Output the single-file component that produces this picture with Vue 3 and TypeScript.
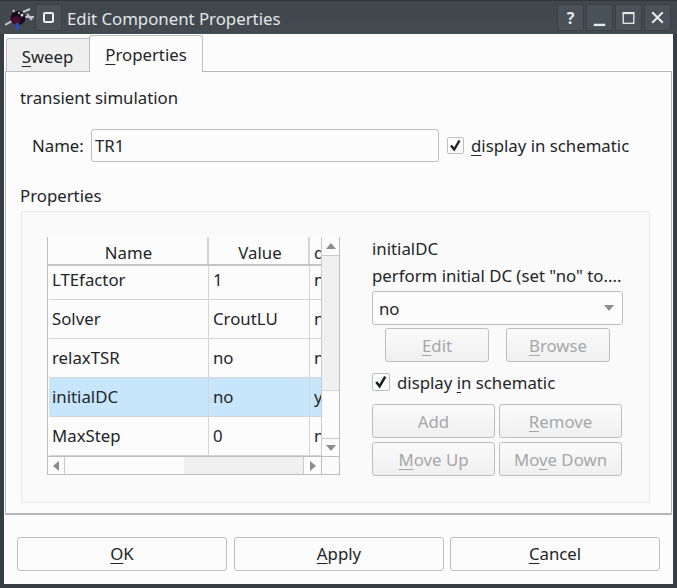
<script setup lang="ts">
interface Row { name: string; value: string; display: string; selected?: boolean; height: number; first?: boolean }
const rows: Row[] = [
  { name: 'LTEfactor', value: '1', display: 'no', height: 34, first: true },
  { name: 'Solver', value: 'CroutLU', display: 'no', height: 39 },
  { name: 'relaxTSR', value: 'no', display: 'no', height: 39 },
  { name: 'initialDC', value: 'no', display: 'yes', selected: true, height: 39 },
  { name: 'MaxStep', value: '0', display: 'no', height: 39 },
]
</script>

<template>
  <div class="window">
    <header class="titlebar">
      <svg class="logo" width="29" height="27" viewBox="0 0 29 27">
        <path d="M0 20 L9 15 M18 7 L25 4 M19 12 L29 12 M22 9 L27 15 M8 5 L11 9" stroke="#c4c4ce" stroke-width="2" fill="none" />
        <ellipse cx="13" cy="13" rx="7.5" ry="7" fill="#170c1c" />
        <ellipse cx="11" cy="15" rx="4.5" ry="3.6" fill="#4a0f2a" />
        <path d="M12 18 L13 25" stroke="#2a4fa8" stroke-width="3.5" />
        <circle cx="17" cy="10" r="1.5" fill="#d8d8e0" />
        <circle cx="14" cy="8" r="1" fill="#d8d8e0" />
      </svg>
      <button class="wbtn sys"><span class="sysglyph"></span></button>
      <span class="title">Edit Component Properties</span>
      <span class="spacer"></span>
      <div class="wbtns">
        <button class="wbtn help">?</button>
        <button class="wbtn"><svg width="26" height="27" viewBox="0 0 26 27"><rect x="7" y="20" width="12" height="2.4" fill="#e6e8e9" /></svg></button>
        <button class="wbtn"><svg width="26" height="27" viewBox="0 0 26 27"><rect x="7.5" y="8.5" width="11" height="11" fill="none" stroke="#e6e8e9" stroke-width="1.4" /><rect x="7" y="8" width="12" height="2" fill="#e6e8e9" /></svg></button>
        <button class="wbtn"><svg width="26" height="27" viewBox="0 0 26 27"><path d="M7.5 8 L18.5 19 M18.5 8 L7.5 19" stroke="#e6e8e9" stroke-width="2.2" /></svg></button>
      </div>
    </header>

    <main class="client">
      <div class="tabs">
        <div class="tab"><span class="m">S</span>weep</div>
        <div class="tab active"><span class="m">P</span>roperties</div>
      </div>
      <section class="pane">
        <div class="desc">transient simulation</div>
        <div class="name-row">
          <label class="name-label">Name:</label>
          <div class="input">TR1</div>
          <span class="check"><svg width="17" height="17" viewBox="0 0 17 17"><path d="M4 8.5 L7.2 12.5 L12.5 3.5" fill="none" stroke="#1c1f22" stroke-width="2.4" /></svg></span>
          <span class="check-text"><span class="m">d</span>isplay in schematic</span>
        </div>
        <div class="group-title">Properties</div>
        <div class="group">
          <div class="table">
            <div class="table-main">
              <div class="thead">
                <div class="th c1">Name</div>
                <div class="th c2">Value</div>
                <div class="th c3">display</div>
              </div>
              <div v-for="r in rows" :key="r.name" class="tr" :class="{ sel: r.selected, first: r.first }" :style="{ height: r.height + 'px' }">
                <div class="td c1">{{ r.name }}</div>
                <div class="td c2">{{ r.value }}</div>
                <div class="td c3">{{ r.display }}</div>
              </div>
            </div>
            <div class="vbar">
              <div class="arrow-box top"><span class="tri up"></span></div>
              <div class="vthumb"></div>
              <div class="vtrack"></div>
              <div class="arrow-box bottom"><span class="tri down"></span></div>
            </div>
            <div class="hbar">
              <div class="harrow"><span class="tri left"></span></div>
              <div class="hthumb"></div>
              <div class="htrack"></div>
              <div class="harrow right-a"><span class="tri right"></span></div>
            </div>
            <div class="corner"></div>
          </div>

          <div class="side">
            <div class="side-name">initialDC</div>
            <div class="side-desc">perform initial DC (set "no" to....</div>
            <div class="combo"><span>no</span><span class="tri down combo-tri"></span></div>
            <div class="edit-row">
              <button class="btn dis edit"><span class="m">E</span>dit</button>
              <button class="btn dis edit"><span class="m">B</span>rowse</button>
            </div>
            <div class="side-check">
              <span class="check big"><svg width="18" height="18" viewBox="0 0 17 17"><path d="M4 8.5 L7.2 12.5 L12.5 3.5" fill="none" stroke="#1c1f22" stroke-width="2.4" /></svg></span>
              <span class="check-text">display <span class="m">i</span>n schematic</span>
            </div>
            <div class="btn-grid">
              <button class="btn dis">Add</button>
              <button class="btn dis"><span class="m">R</span>emove</button>
              <button class="btn dis"><span class="m">M</span>ove Up</button>
              <button class="btn dis">Mo<span class="m">v</span>e Down</button>
            </div>
          </div>
        </div>
      </section>
      <footer class="footer">
        <button class="btn main"><span class="m">O</span>K</button>
        <button class="btn main"><span class="m">A</span>pply</button>
        <button class="btn main last"><span class="m">C</span>ancel</button>
      </footer>
    </main>
  </div>
</template>

<style>
html, body { margin: 0; padding: 0; background: #3a4248; }
</style>

<style scoped>
* { box-sizing: border-box; }
.window {
  width: 677px;
  height: 588px;
  display: flex;
  flex-direction: column;
  background: #363e44;
  font-family: "Noto Sans", sans-serif;
  font-size: 16.8px;
  color: #232629;
  overflow: hidden;
}
.titlebar {
  height: 34px;
  flex: none;
  display: flex;
  align-items: flex-start;
  padding: 3px 6px 0 5px;
  background: linear-gradient(#3f474d, #434b51);
  border-top: 1px solid #2f363b;
  color: #e3e5e6;
}
.logo { flex: none; margin: 1px 1px 0 0; }
.wbtn {
  width: 27px;
  height: 27px;
  padding: 0;
  border: 1px solid #394045;
  border-radius: 2px;
  background: #495258;
  color: #e6e8e9;
  display: flex;
  align-items: center;
  justify-content: center;
  font-family: "Noto Sans", sans-serif;
}
.sys { flex: none; }
.sysglyph {
  width: 11px;
  height: 11px;
  border: 2px solid #eceeef;
  border-radius: 2px;
}
.title { margin-left: 5px; line-height: 32px; margin-top: -1px; white-space: nowrap; }
.spacer { flex: 1; }
.wbtns { display: flex; gap: 2px; }
.help { font-weight: 700; font-size: 16px; }
.client {
  flex: 1;
  margin: 0 4px 4px 4px;
  background: #fcfcfc;
  display: flex;
  flex-direction: column;
  padding: 0 1px 0 1px;
}
.tabs {
  display: flex;
  align-items: flex-end;
  height: 38px;
  padding-left: 1px;
  margin-bottom: -1px;
  position: relative;
  z-index: 1;
}
.tab {
  width: 84px;
  height: 34px;
  background: #efefef;
  border: 1px solid #bcbebf;
  border-bottom: 1px solid #bcbebf;
  border-right: none;
  border-radius: 3px 0 0 0;
  text-align: center;
  line-height: 36px;
  padding-right: 2px;
}
.tab.active {
  width: 114px;
  height: 37px;
  background: #fcfcfc;
  border-right: 1px solid #bcbebf;
  border-bottom: none;
  border-radius: 3px 3px 0 0;
  line-height: 38px;
  margin-left: -1px;
  padding-right: 0;
}
.m { text-decoration: underline; text-underline-offset: 3px; text-decoration-thickness: 1px; text-decoration-skip-ink: none; }
.pane {
  width: 667px;
  height: 444px;
  flex: none;
  background: #fcfcfc;
  border: 1px solid #b4b6b8;
  border-bottom-width: 2px;
  padding: 14px 0 0 14px;
  display: flex;
  flex-direction: column;
}
.desc { line-height: 24px; height: 24px; }
.name-row {
  display: flex;
  align-items: center;
  margin-top: 19px;
  height: 33px;
  padding-left: 12px;
}
.name-label { width: 59px; flex: none; }
.input {
  width: 348px;
  height: 33px;
  flex: none;
  border: 1px solid #bcbebf;
  border-radius: 3px;
  background: #fcfcfc;
  padding-left: 3px;
  line-height: 31px;
}
.check {
  width: 17px;
  height: 17px;
  flex: none;
  border: 1px solid #bcbebf;
  border-radius: 2px;
  background: #fcfcfc;
  display: block;
}
.check.big { width: 18px; height: 18px; }
.check svg { display: block; margin: -1px; }
.name-row .check { margin-left: 8px; }
.check-text { margin-left: 7px; white-space: nowrap; }
.group-title { margin-top: 22px; line-height: 24px; height: 24px; }
.group {
  margin-top: 3px;
  width: 629px;
  height: 292px;
  margin-left: 1px;
  border: 1px solid #e8e8e8;
  border-radius: 2px;
  background: #fafafa;
  padding: 25px 0 0 25px;
  display: flex;
}
.table {
  width: 293px;
  height: 238px;
  flex: none;
  display: grid;
  grid-template-columns: 274px 19px;
  grid-template-rows: 219px 19px;
  background: #fcfcfc;
}
.table-main {
  overflow: hidden;
  border-left: 1px solid #bcbebf;
  background: #fcfcfc;
}
.thead { display: flex; height: 29px; border-bottom: 2px solid #c4c5c6; }
.th {
  text-align: center;
  line-height: 32px;
  border-right: 2px solid #d4d5d6;
  flex: none;
  overflow: hidden;
}
.th.c1 { padding-left: 2px; }
.th.c2 { padding-left: 3px; }
.tr { display: flex; border-bottom: 1px solid #d4d5d6; margin-left: 1px; }
.tr.sel { background: #c7e6fb; }
.td {
  flex: none;
  padding: 0 0 2px 4px;
  display: flex;
  align-items: center;
  border-right: 1px solid #d4d5d6;
  overflow: hidden;
  white-space: nowrap;
}
.tr.first .td { padding-bottom: 7px; }
.c1 { width: 161px; }
.c2 { width: 101px; }
.c3 { width: 80px; }
.th.c3 { text-align: left; padding-left: 4px; }
.tr .c1 { width: 160px; padding-left: 3px; }
.vbar {
  display: flex;
  flex-direction: column;
  border-left: 1px solid #c9cacb;
  border-right: 1px solid #bcbebf;
  background: #fcfcfc;
}
.arrow-box { height: 18px; display: flex; align-items: center; justify-content: center; flex: none; }
.arrow-box.top { border-bottom: 1px solid #c9cacb; height: 19px; }
.arrow-box.bottom { border-top: 1px solid #c9cacb; height: 18px; }
.vthumb { height: 135px; flex: none; background: #f0f0f0; border-bottom: 1px solid #d8d8d8; }
.vtrack { flex: 1; }
.tri { display: block; width: 0; height: 0; border-style: solid; border-color: transparent; }
.tri.up { border-width: 0 5px 6px; border-bottom-color: #8a8c8e; }
.tri.down { border-width: 6px 5px 0; border-top-color: #8a8c8e; }
.tri.left { border-width: 5px 6px 5px 0; border-right-color: #8a8c8e; }
.tri.right { border-width: 5px 0 5px 6px; border-left-color: #8a8c8e; }
.hbar {
  display: flex;
  border: 1px solid #bcbebf;
  border-right: none;
  background: #fcfcfc;
}
.harrow { width: 17px; flex: none; display: flex; align-items: center; justify-content: center; border-right: 1px solid #c9cacb; }
.harrow.right-a { border-right: none; border-left: 1px solid #c9cacb; width: 18px; }
.hthumb { width: 119px; flex: none; }
.htrack { flex: 1; background: #f0f0f0; }
.corner { border: 1px solid #bcbebf; background: #fafafa; }
.side {
  width: 251px;
  margin-left: 32px;
  flex: none;
}
.side-name { height: 24px; line-height: 24px; }
.side-desc { height: 30px; line-height: 30px; white-space: nowrap; }
.combo {
  height: 34px;
  border: 1px solid #bcbebf;
  border-radius: 3px;
  background: #fcfcfc;
  display: flex;
  align-items: center;
  justify-content: space-between;
  padding: 0 8px 0 6px;
}
.btn {
  font-family: "Noto Sans", sans-serif;
  font-size: 16.8px;
  border: 1px solid #bcbebf;
  border-radius: 3px;
  padding: 0;
  color: #232629;
  background: #fcfcfc;
  height: 34px;
}
.btn.dis {
  color: #a5a7a8;
  background: linear-gradient(#fafafa, #f0f0f0);
}
.edit-row { display: flex; gap: 17px; padding-left: 13px; margin-top: 3px; }
.btn.edit { width: 104px; }
.side-check { display: flex; align-items: center; margin-top: 11px; height: 18px; }
.btn-grid {
  display: grid;
  grid-template-columns: 123px 123px;
  grid-auto-rows: 34px;
  column-gap: 4px;
  row-gap: 4px;
  margin-top: 13px;
}
.footer {
  display: flex;
  gap: 7px;
  padding: 22px 0 0 12px;
}
.btn.main { width: 210px; height: 34px; background: #fbfbfb; padding-bottom: 2px; }
.btn.main.last { margin-left: -1px; }
</style>
